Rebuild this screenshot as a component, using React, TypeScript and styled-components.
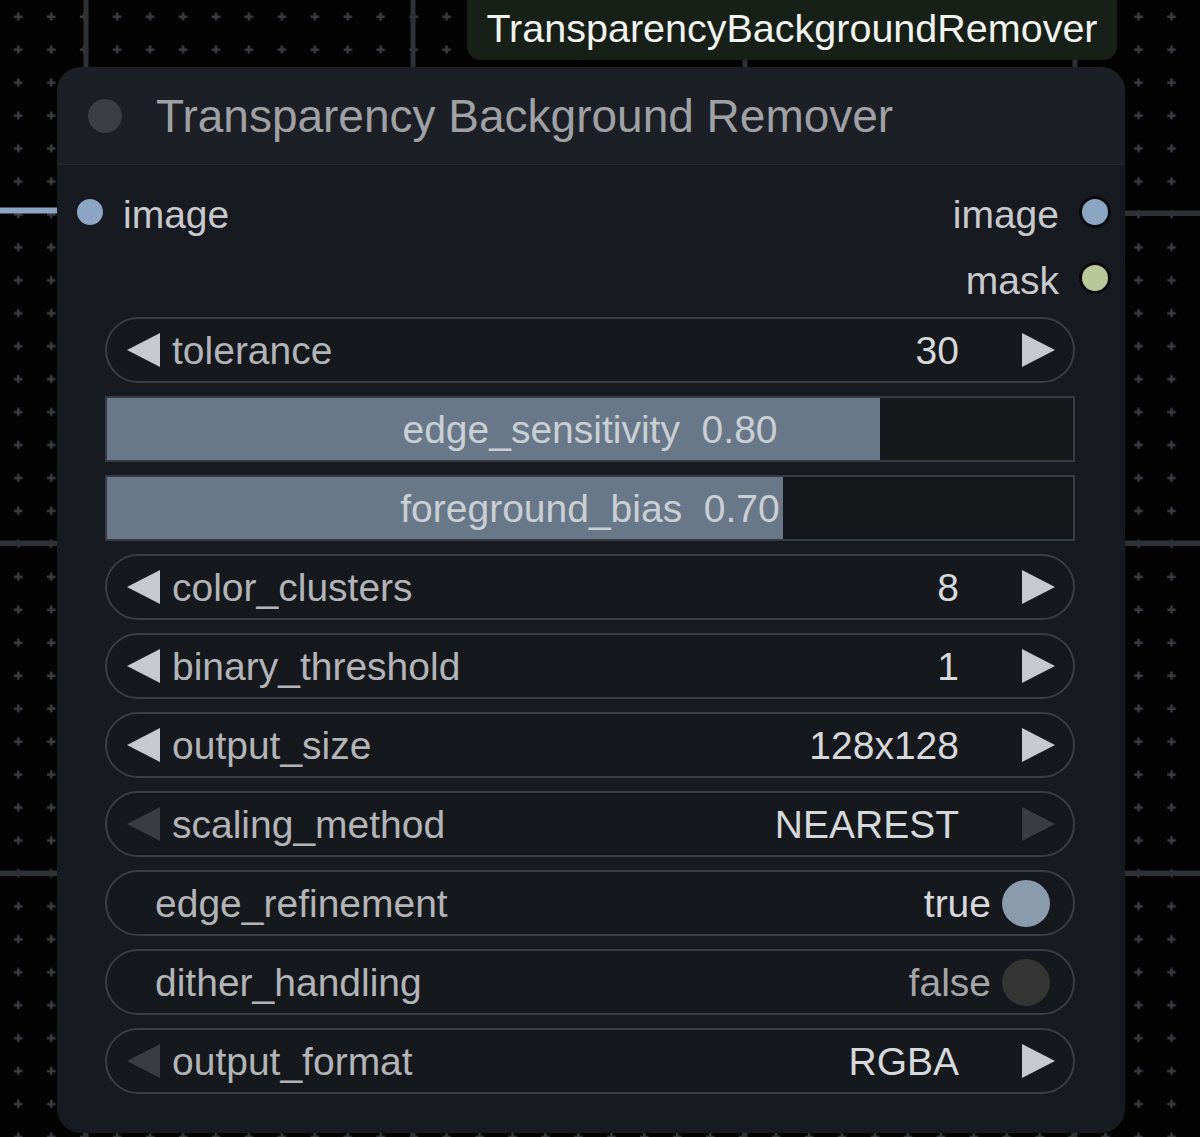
import React from "react";
import styled, { createGlobalStyle } from "styled-components";

const Global = createGlobalStyle`
  html, body { margin: 0; padding: 0; background: #030304; }
  body { font-family: "Liberation Sans", Arial, Helvetica, sans-serif; }
  #root { width: 1200px; height: 1137px; }
`;

const Canvas = styled.div`
  position: relative;
  width: 1200px;
  height: 1137px;
  overflow: hidden;
  background: #030304;
`;

const GridSvg = styled.svg`
  position: absolute;
  left: 0;
  top: 0;
`;

const Badge = styled.div`
  position: absolute;
  left: 467px;
  top: -20px;
  width: 650px;
  height: 80px;
  box-sizing: border-box;
  padding: 20px 0 3px;
  border-radius: 14px;
  background: #172016;
  color: #f1f3f1;
  font-size: 39.5px;
  line-height: 1;
  display: flex;
  align-items: center;
  justify-content: center;
`;

const Node = styled.div`
  position: absolute;
  left: 57px;
  top: 67px;
  width: 1068px;
  height: 1066px;
  border-radius: 24px;
  background: #171a20;
  overflow: hidden;
  display: flex;
  flex-direction: column;
`;

const Header = styled.div`
  flex: none;
  height: 98px;
  box-sizing: border-box;
  background: #1c1f26;
  border-bottom: 1px solid #23262d;
  display: flex;
  align-items: center;
  gap: 34px;
  padding-left: 31px;
`;

const HeaderDot = styled.div`
  width: 34px;
  height: 34px;
  border-radius: 50%;
  background: #3a3d44;
`;

const Title = styled.div`
  font-size: 46px;
  line-height: 1;
  color: #9fa1a5;
`;

const Slots = styled.div`
  display: flex;
  justify-content: space-between;
  padding: 14px 14px 0 20px;
`;

const SlotColumn = styled.div<{ $align: "start" | "end" }>`
  display: flex;
  flex-direction: column;
  align-items: ${(p) => (p.$align === "start" ? "flex-start" : "flex-end")};
`;

const SlotRow = styled.div`
  height: 66px;
  display: flex;
  align-items: center;
  gap: 20px;
`;

const SlotLabel = styled.span`
  font-size: 39px;
  line-height: 1;
  padding-top: 5px;
  color: #c7c9cc;
`;

const SlotDot = styled.span<{ $color: string; $outlined?: boolean }>`
  display: block;
  box-sizing: content-box;
  width: 26px;
  height: 26px;
  border-radius: 50%;
  background: ${(p) => p.$color};
  border: ${(p) => (p.$outlined ? "3px solid #0a0b0d" : "0")};
`;

const Widgets = styled.div`
  display: flex;
  flex-direction: column;
  gap: 13px;
  padding: 6px 50px 0 48px;
`;

const Pill = styled.div`
  height: 66px;
  box-sizing: border-box;
  border: 2px solid #3a3d43;
  border-radius: 33px;
  background: #15181d;
  display: flex;
  align-items: center;
  font-size: 39px;
  line-height: 1;
`;

const ComboPill = styled(Pill)`
  padding: 0 18px 0 20px;
`;

const TogglePill = styled(Pill)`
  padding: 0 23px 0 48px;
`;

const Arrow = styled.svg`
  flex: none;
  display: block;
`;

const Label = styled.span`
  flex: 1;
  color: #b2b4b8;
  white-space: pre;
`;

const ComboLabel = styled(Label)`
  margin-left: 12px;
`;

const Value = styled.span<{ $dim?: boolean }>`
  color: ${(p) => (p.$dim ? "#a3a5a8" : "#d6d8db")};
  white-space: pre;
`;

const ComboValue = styled(Value)`
  margin-right: 63px;
`;

const Knob = styled.span<{ $on: boolean }>`
  width: 48px;
  height: 47px;
  border-radius: 50%;
  margin-left: 11px;
  background: ${(p) => (p.$on ? "#8b9bae" : "#343434")};
`;

const Slider = styled.div`
  position: relative;
  height: 66px;
  box-sizing: border-box;
  border: 2px solid #383b41;
  background: #15171b;
  display: flex;
  align-items: center;
  justify-content: center;
  font-size: 39px;
  line-height: 1;
  color: #cacfd4;
  white-space: pre;
`;

const SliderFill = styled.div`
  position: absolute;
  left: 0;
  top: 0;
  bottom: 0;
  background: #687889;
`;

const SliderText = styled.span`
  position: relative;
`;

const ArrowIcon = ({ dir, enabled }: { dir: "left" | "right"; enabled: boolean }) => (
  <Arrow width="33" height="34" viewBox="0 0 33 34">
    <polygon
      points={dir === "left" ? "0,17 33,0 33,34" : "33,17 0,0 0,34"}
      fill={enabled ? "#c6c9cd" : "#393c43"}
    />
  </Arrow>
);

type Combo = { kind: "combo"; label: string; value: string; left: boolean; right: boolean };
type Sl = { kind: "slider"; label: string; value: string; frac: number };
type Tg = { kind: "toggle"; label: string; on: boolean };
type W = Combo | Sl | Tg;

const widgets: W[] = [
  { kind: "combo", label: "tolerance", value: "30", left: true, right: true },
  { kind: "slider", label: "edge_sensitivity", value: "0.80", frac: 0.8 },
  { kind: "slider", label: "foreground_bias", value: "0.70", frac: 0.7 },
  { kind: "combo", label: "color_clusters", value: "8", left: true, right: true },
  { kind: "combo", label: "binary_threshold", value: "1", left: true, right: true },
  { kind: "combo", label: "output_size", value: "128x128", left: true, right: true },
  { kind: "combo", label: "scaling_method", value: "NEAREST", left: false, right: false },
  { kind: "toggle", label: "edge_refinement", on: true },
  { kind: "toggle", label: "dither_handling", on: false },
  { kind: "combo", label: "output_format", value: "RGBA", left: false, right: true },
];

const renderWidget = (w: W) => {
  if (w.kind === "combo") {
    return (
      <ComboPill key={w.label}>
        <ArrowIcon dir="left" enabled={w.left} />
        <ComboLabel>{w.label}</ComboLabel>
        <ComboValue>{w.value}</ComboValue>
        <ArrowIcon dir="right" enabled={w.right} />
      </ComboPill>
    );
  }
  if (w.kind === "slider") {
    return (
      <Slider key={w.label}>
        <SliderFill style={{ width: `${w.frac * 100}%` }} />
        <SliderText>{`${w.label}  ${w.value}`}</SliderText>
      </Slider>
    );
  }
  return (
    <TogglePill key={w.label}>
      <Label>{w.label}</Label>
      <Value $dim={!w.on}>{w.on ? "true" : "false"}</Value>
      <Knob $on={w.on} />
    </TogglePill>
  );
};

const Grid = () => {
  const vLines = [86, 413, 745, 1075];
  const hLines = [543, 873];
  return (
    <GridSvg width="1200" height="1137" viewBox="0 0 1200 1137">
      <defs>
        <pattern id="dots" patternUnits="userSpaceOnUse" x="2" y="0" width="32.95" height="32.95">
          <rect x="15" y="12.5" width="2.5" height="8" fill="#383b40" />
          <rect x="12" y="15.5" width="8.5" height="2.5" fill="#383b40" />
        </pattern>
      </defs>
      <rect x="0" y="0" width="1200" height="1137" fill="url(#dots)" />
      {vLines.map((x) => (
        <rect key={"v" + x} x={x - 2.5} y="0" width="5" height="1137" fill="#2e3136" />
      ))}
      {hLines.map((y) => (
        <rect key={"h" + y} x="0" y={y - 2.5} width="1200" height="5.5" fill="#2e3136" />
      ))}
      <rect x="1100" y="210.5" width="100" height="5.5" fill="#2e3136" />
      <rect x="0" y="207.5" width="80" height="6" fill="#8ca5c4" />
    </GridSvg>
  );
};

export default function App() {
  return (
    <Canvas>
      <Global />
      <Grid />
      <Badge>TransparencyBackgroundRemover</Badge>
      <Node>
        <Header>
          <HeaderDot />
          <Title>Transparency Background Remover</Title>
        </Header>
        <Slots>
          <SlotColumn $align="start">
            <SlotRow>
              <SlotDot $color="#8ca5c4" />
              <SlotLabel>image</SlotLabel>
            </SlotRow>
          </SlotColumn>
          <SlotColumn $align="end">
            <SlotRow>
              <SlotLabel>image</SlotLabel>
              <SlotDot $color="#8ca5c4" $outlined />
            </SlotRow>
            <SlotRow>
              <SlotLabel>mask</SlotLabel>
              <SlotDot $color="#b9c89b" $outlined />
            </SlotRow>
          </SlotColumn>
        </Slots>
        <Widgets>{widgets.map(renderWidget)}</Widgets>
      </Node>
    </Canvas>
  );
}
